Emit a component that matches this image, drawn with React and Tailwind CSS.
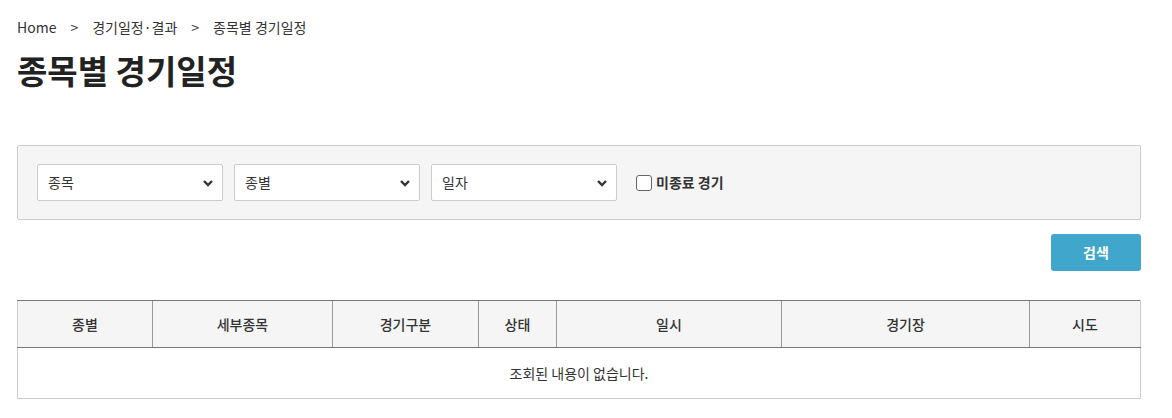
import React from "react";

const Chevron = () => (
  <svg width="12" height="12" viewBox="0 0 12 12" className="shrink-0">
    <path d="M2 4l4 4 4-4" fill="none" stroke="#333" strokeWidth="2.4" />
  </svg>
);

const Select = ({ label }) => (
  <div className="w-[186px] h-[37px] bg-white border border-[#ccc] rounded-[2px] flex items-center justify-between pl-[10px] pr-[8px] text-[14px] text-[#333]">
    <span>{label}</span>
    <Chevron />
  </div>
);

const columns = [
  { name: "종별", w: "w-[135px]" },
  { name: "세부종목", w: "w-[180px]" },
  { name: "경기구분", w: "w-[146px]" },
  { name: "상태", w: "w-[78px]" },
  { name: "일시", w: "w-[225px]" },
  { name: "경기장", w: "w-[248px]" },
  { name: "시도", w: "" },
];

export default function App() {
  return (
    <div
      className="w-[1172px] h-[418px] bg-white text-[#333]"
      style={{ fontFamily: '"Noto Sans CJK KR", "Noto Sans", sans-serif' }}
    >
      <div className="ml-[17px] w-[1124px]">
        <div className="pt-[17px] flex items-center text-[14px] leading-[20px] text-[#333]">
          <span>Home</span>
          <span className="mx-[14px]">&gt;</span>
          <span>경기일정·결과</span>
          <span className="mx-[14px]">&gt;</span>
          <span>종목별 경기일정</span>
        </div>
        <h1 className="mt-[13px] text-[33px] leading-[40px] font-bold text-[#222]">
          종목별 경기일정
        </h1>

        <div className="mt-[55px] h-[75px] bg-[#f5f5f5] border border-[#ccc] rounded-[2px] flex items-center gap-[11px] pl-[19px]">
          <Select label="종목" />
          <Select label="종별" />
          <Select label="일자" />
          <label className="ml-[8px] flex items-center gap-[4px] text-[14px] font-bold text-[#333]">
            <span className="w-[16px] h-[16px] bg-white border border-[#666] rounded-[3px]" />
            미종료 경기
          </label>
        </div>

        <div className="mt-[14px] flex justify-end">
          <button className="w-[90px] h-[37px] bg-[#41a6cb] rounded-[3px] text-white font-bold text-[14px]">
            검색
          </button>
        </div>

        <table className="mt-[29px] w-full border-collapse text-[14px]">
          <thead>
            <tr className="h-[47px] bg-[#f5f5f5]">
              {columns.map((c, i) => (
                <th
                  key={c.name}
                  className={`${c.w} font-medium text-[#333] border-t border-t-[#777] border-b border-b-[#777] ${
                    i > 0 ? "border-l border-l-[#999]" : "border-l border-l-[#ccc]"
                  } ${i === columns.length - 1 ? "border-r border-r-[#ccc]" : ""}`}
                >
                  {c.name}
                </th>
              ))}
            </tr>
          </thead>
          <tbody>
            <tr className="h-[51px]">
              <td
                colSpan={7}
                className="text-center text-[#333] border-b border-[#ccc] border-l border-r"
              >
                조회된 내용이 없습니다.
              </td>
            </tr>
          </tbody>
        </table>
      </div>
    </div>
  );
}
